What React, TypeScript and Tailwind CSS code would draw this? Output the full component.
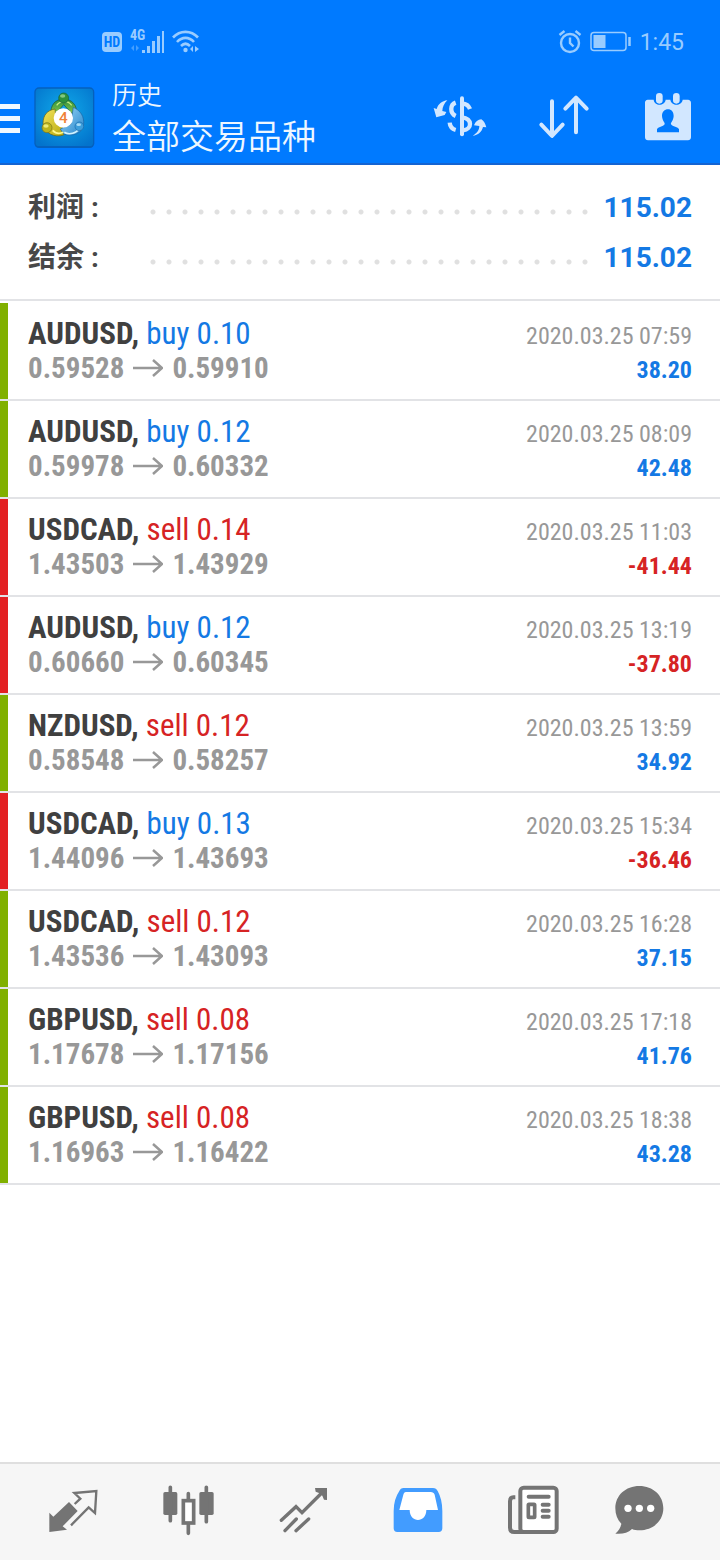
import type { ReactNode } from "react";

// ─── Data ──────────────────────────────────────────────────────────────────────
interface Deal {
  symbol: string;
  side: "buy" | "sell";
  volume: string;
  open: string;
  close: string;
  time: string;
  profit: string;
}

const DEALS: Deal[] = [
  { symbol: "AUDUSD", side: "buy", volume: "0.10", open: "0.59528", close: "0.59910", time: "2020.03.25 07:59", profit: "38.20" },
  { symbol: "AUDUSD", side: "buy", volume: "0.12", open: "0.59978", close: "0.60332", time: "2020.03.25 08:09", profit: "42.48" },
  { symbol: "USDCAD", side: "sell", volume: "0.14", open: "1.43503", close: "1.43929", time: "2020.03.25 11:03", profit: "-41.44" },
  { symbol: "AUDUSD", side: "buy", volume: "0.12", open: "0.60660", close: "0.60345", time: "2020.03.25 13:19", profit: "-37.80" },
  { symbol: "NZDUSD", side: "sell", volume: "0.12", open: "0.58548", close: "0.58257", time: "2020.03.25 13:59", profit: "34.92" },
  { symbol: "USDCAD", side: "buy", volume: "0.13", open: "1.44096", close: "1.43693", time: "2020.03.25 15:34", profit: "-36.46" },
  { symbol: "USDCAD", side: "sell", volume: "0.12", open: "1.43536", close: "1.43093", time: "2020.03.25 16:28", profit: "37.15" },
  { symbol: "GBPUSD", side: "sell", volume: "0.08", open: "1.17678", close: "1.17156", time: "2020.03.25 17:18", profit: "41.76" },
  { symbol: "GBPUSD", side: "sell", volume: "0.08", open: "1.16963", close: "1.16422", time: "2020.03.25 18:38", profit: "43.28" },
];

const SUMMARY = [
  { label: "利润", value: "115.02" },
  { label: "结余", value: "115.02" },
];

// ─── Status bar ────────────────────────────────────────────────────────────────
function StatusBar() {
  return (
    <div className="flex h-[70px] items-center justify-between pt-[14px] pr-9 pl-[102px] text-[#99ccff]">
      <div className="flex items-center gap-2">
        <span className="flex h-5 w-5 items-center justify-center rounded bg-[#99ccff] font-['Roboto_Condensed',Roboto,sans-serif] text-sm leading-5 font-bold text-[#007aff]">HD</span>
        <svg width="34" height="28" viewBox="0 0 34 28" fill="currentColor">
          <text x="0" y="12" fontSize="14" fontWeight="700" fontFamily="Roboto Condensed, Roboto, sans-serif">4G</text>
          <path d="M12 22h3v3h-3zM17 18h3v7h-3zM22 13h3v12h-3zM27 8h3v17h-3zM32 3h3v22h-3z" />
          <path d="M4 17v6L1 20zM6 17v6l3-3z" opacity=".45" />
        </svg>
        <svg width="28" height="24" viewBox="0 0 28 24" fill="none" stroke="currentColor" strokeWidth="2.6">
          <path d="M1 7.500C8 0 19 0 26 7.500M5 12C10 6.500 17 6.500 22 12M9 16c3-3 6-3 9 0" />
          <circle cx="13.500" cy="20" r="2.200" fill="currentColor" stroke="none" />
          <path d="M21 16v6l-3-3zM23 16v6l4-3z" fill="currentColor" stroke="none" />
        </svg>
      </div>
      <div className="flex items-center">
        <svg width="24" height="26" viewBox="0 0 24 26" fill="none" stroke="currentColor" strokeWidth="2.4">
          <circle cx="12" cy="14" r="9" />
          <path d="M12 8.500V14l3.500 3.500M1.500 6 6.500 2M22.500 6l-5-4" />
        </svg>
        <svg className="mr-2 ml-2" width="42" height="22" viewBox="0 0 42 22" fill="none" stroke="currentColor">
          <rect x="1" y="1.500" width="35" height="18" rx="3" strokeWidth="1.500" />
          <rect x="3.500" y="4" width="12" height="13" fill="currentColor" stroke="none" />
          <path d="M39.500 6v9" strokeWidth="2.500" />
        </svg>
        <span className="pt-[2px] text-[23px]">1:45</span>
      </div>
    </div>
  );
}

// ─── App bar ───────────────────────────────────────────────────────────────────
function Logo() {
  return (
    <svg className="ml-3 shrink-0" width="64" height="64" viewBox="12 15 192 192">
      <defs>
        <radialGradient id="tile" cx=".5" cy=".4" r=".7">
          <stop offset="0" stopColor="#10aaea" />
          <stop offset="1" stopColor="#0373cc" />
        </radialGradient>
        <linearGradient id="green" x2="0" y2="1">
          <stop offset="0" stopColor="#2c8f3c" />
          <stop offset="1" stopColor="#8fcb4c" />
        </linearGradient>
        <linearGradient id="yellow" x2="1" y2="1">
          <stop offset="0" stopColor="#f3e45a" />
          <stop offset="1" stopColor="#b4a50c" />
        </linearGradient>
        <linearGradient id="blue" x2="1" y2="1">
          <stop offset="0" stopColor="#9ad9fa" />
          <stop offset="1" stopColor="#2583c9" />
        </linearGradient>
      </defs>
      <rect x="19" y="22" width="180" height="182" rx="14" fill="#0560bd" />
      <rect x="23" y="26" width="172" height="172" rx="10" fill="url(#tile)" />
      <path d="M69 106C66 74 82 58 106 57c26 0 42 18 41 49l-14-4-26-28-25 28z" fill="url(#green)" stroke="#174e38" strokeWidth="2" />
      <path d="M81 87c-24 4-35 18-36 42 4 31 34 45 62 36l9-16-30-18z" fill="url(#yellow)" stroke="#625f16" strokeWidth="2" />
      <path d="M136 82c22 10 33 27 31 52-3 25-32 38-60 28l-10-15 31-14z" fill="url(#blue)" stroke="#1762a3" strokeWidth="2" />
      <path d="M86 76c10-15 33-17 45 0" fill="none" stroke="#c7ed81" strokeWidth="4" />
      <path d="M74 151c8 9 20 11 32 6" fill="none" stroke="#fff78b" strokeWidth="5" />
      <path d="M109 157c15 9 37 2 45-11" fill="none" stroke="#d1f3ff" strokeWidth="5" />
      <circle cx="107" cy="54" r="15" fill="#2d913b" stroke="#17633b" strokeWidth="2" />
      <circle cx="57" cy="143" r="15" fill="#bcb41d" stroke="#77721c" strokeWidth="2" />
      <circle cx="154" cy="139" r="13" fill="#3c9edb" stroke="#1b69ae" strokeWidth="2" />
      <ellipse cx="104" cy="48" rx="8" ry="5" fill="#83c780" />
      <ellipse cx="54" cy="138" rx="8" ry="5" fill="#eeea76" />
      <ellipse cx="152" cy="134" rx="7" ry="4" fill="#a7dbf6" />
      <circle cx="106" cy="114" r="29" fill="#fff" />
      <text x="106" y="130" textAnchor="middle" fontSize="46" fontWeight="500" fontFamily="Roboto, sans-serif" fill="#ef8238">4</text>
    </svg>
  );
}

function ToolButton({ label, viewBox, children }: { label: string; viewBox: string; children: ReactNode }) {
  return (
    <button type="button" aria-label={label} className="text-[#d2e7ff]">
      <svg width="60" height="60" viewBox={viewBox} fill="none" stroke="currentColor" strokeLinecap="round" strokeLinejoin="round">
        {children}
      </svg>
    </button>
  );
}

function AppBar() {
  return (
    <div className="flex h-[93px] items-center pr-[22px]">
      <button type="button" aria-label="菜单" className="mt-1 flex w-5 flex-col gap-[7px]">
        <span className="h-[5px] bg-[#f0f8ff]" />
        <span className="h-[5px] bg-[#f0f8ff]" />
        <span className="h-[5px] bg-[#f0f8ff]" />
      </button>
      <Logo />
      <div className="ml-4 flex-1 pt-[3px] font-[350] text-[#eef7ff]">
        <h1 className="text-[25px] leading-[38px]">历史</h1>
        <p className="text-[34px] leading-[44px]">全部交易品种</p>
      </div>
      <div className="flex gap-11">
        <ToolButton label="货币" viewBox="30 20 180 180">
          <path d="M126 54V162" strokeWidth="12" />
          <path d="M150 86c-4-11-12-16-24-17M107 67c-17 6-18 32 0 40M126 111c32 3 31 36 3 39M107 149c-11-3-17-11-18-22" strokeWidth="13" strokeLinecap="butt" />
          <path d="M82 60C66 62 54 71 50 86l-9-3 8 28 25-7 5-9-12-3c0-12 6-23 15-32zM158 166c14-8 20-18 20-29l-16-2c4-11 12-17 22-18 8 5 12 13 15 24l-10-1c-4 15-14 25-31 26z" fill="currentColor" stroke="none" />
        </ToolButton>
        <ToolButton label="排序" viewBox="342 20 180 180">
          <path d="M396 63v103M364 133l32 34 32-34M468 156V53M436 85l32-33 32 33" strokeWidth="12" />
        </ToolButton>
        <ToolButton label="期间" viewBox="654 20 180 180">
          <path
            d="M683 58h18c2 20 33 20 36 0h14c3 20 34 20 37 0h16c5 0 9 4 9 9v104c0 5-4 9-9 9H684c-5 0-9-4-9-9V67c0-5 3-9 8-9zM711 156h66v-9c-2-7-20-8-24-15-2-5 7-10 8-25 0-13-7-20-17-20s-18 7-18 20c1 15 10 20 8 25-4 7-21 8-23 15z"
            fill="currentColor"
            fillRule="evenodd"
            stroke="none"
          />
          <rect x="708" y="38" width="20" height="32" rx="10" fill="currentColor" stroke="none" />
          <rect x="759" y="38" width="20" height="32" rx="10" fill="currentColor" stroke="none" />
        </ToolButton>
      </div>
    </div>
  );
}

// ─── Summary and deals ─────────────────────────────────────────────────────────
function Summary() {
  return (
    <dl className="border-b-2 border-[#e2e3e6] px-7 pt-[18px] pb-4 text-[28px] leading-[50px] font-bold">
      {SUMMARY.map(({ label, value }) => (
        <div key={label} className="flex items-center">
          <dt className="w-[117px] text-[#484848]">{label} :</dt>
          <span className="mt-2 mr-3 h-4 flex-1 bg-[radial-gradient(circle,#e0e0e0_2px,transparent_3px)] bg-[length:16px_16px]" />
          <dd className="text-[#1479e4]">{value}</dd>
        </div>
      ))}
    </dl>
  );
}

function DealRow({ deal }: { deal: Deal }) {
  const loss = deal.profit.startsWith("-");
  return (
    <li className="flex h-[98px] border-b-2 border-[#e2e3e6] font-['Roboto_Condensed','Liberation_Sans_Narrow',Roboto,sans-serif]">
      <span className={loss ? "w-2 bg-[#e32022]" : "w-2 bg-[#80b000]"} />
      <div className="flex flex-1 justify-between pt-[14px] pr-7 pl-5">
        <div className="leading-[34px]">
          <p className="text-[31px]">
            <b className="text-[#404040]">{deal.symbol},</b>{" "}
            <span className={deal.side === "buy" ? "text-[#1479e4]" : "text-[#d62324]"}>
              {deal.side} {deal.volume}
            </span>
          </p>
          <p className="flex items-center text-[29px] font-bold text-[#989898]">
            {deal.open}
            <svg className="mx-[9px]" width="30" height="18" viewBox="0 0 30 18" fill="none" stroke="currentColor" strokeWidth="2.500">
              <path d="M0 9h29M20 1l9 8-9 8" />
            </svg>
            {deal.close}
          </p>
        </div>
        <div className="pt-[2px] text-right text-2xl leading-[34px]">
          <p className="text-[#989898]">{deal.time}</p>
          <p className={loss ? "font-bold text-[#d62324]" : "font-bold text-[#1479e4]"}>{deal.profit}</p>
        </div>
      </div>
    </li>
  );
}

// ─── Bottom navigation ─────────────────────────────────────────────────────────
function NavButton({ label, viewBox, active = false, children }: {
  label: string; viewBox: string; active?: boolean; children: ReactNode;
}) {
  return (
    <button
      type="button"
      aria-label={label}
      aria-current={active ? "page" : undefined}
      className={active ? "flex flex-1 items-center justify-center text-[#429cff]" : "flex flex-1 items-center justify-center text-[#747474]"}
    >
      <svg width="72" height="60" viewBox={viewBox} fill="none" stroke="currentColor">
        {children}
      </svg>
    </button>
  );
}

function BottomNav() {
  return (
    <nav className="mt-auto flex h-[98px] border-t-2 border-[#dfdfdf] bg-[#f6f6f6] px-4">
      <NavButton label="行情" viewBox="22 66 216 180">
        <path d="M59 158l12 12 47-44 26 27-45 46 13 10-53 7z" fill="currentColor" stroke="none" />
        <path d="M135 132l17-16-18-17 66-6-4 66-19-17-53 54" strokeWidth="7" />
      </NavButton>
      <NavButton label="图表" viewBox="366 66 216 180">
        <rect x="400" y="96" width="42" height="69" rx="5" fill="currentColor" stroke="none" />
        <rect x="508" y="96" width="43" height="69" rx="5" fill="currentColor" stroke="none" />
        <path d="M421 82v100M529 82v103M475 101v16M475 194v26" strokeWidth="11" strokeLinecap="round" />
        <rect x="460" y="122" width="31" height="67" strokeWidth="11" fill="#fff" />
      </NavButton>
      <NavButton label="交易" viewBox="20 66 216 180">
        <path d="M63 181l44-41 18 18 65-65M74 212l34-35M107 212l38-35" strokeWidth="10" strokeLinecap="round" />
        <path d="M164 84h36v36l-9-1-5-12-8-7-12-5z" fill="currentColor" stroke="none" />
      </NavButton>
      <NavButton label="历史" viewBox="364 66 216 180" active>
        <path d="M432 84h88c7 0 11 3 14 9q14 25 14 60v52c0 7-4 11-11 11H413c-7 0-11-4-11-11v-52q0-35 17-60c3-6 6-9 13-9z" fill="currentColor" stroke="none" />
        <path d="M439 96h74c6 0 10 3 12 8l10 46h-35c0 40-50 40-50 0h-31l12-46c2-5 3-8 8-8z" fill="#fff" stroke="none" />
      </NavButton>
      <NavButton label="新闻" viewBox="18 66 216 180">
        <rect x="91" y="83" width="109" height="133" rx="10" strokeWidth="12" fill="#fff" />
        <path d="M76 112H70q-10 0-10 12v79q0 13 13 13h28" strokeWidth="12" strokeLinejoin="round" />
        <path d="M116 110h60M158 134h18M158 152h18M158 170h18" strokeWidth="12" strokeLinecap="round" />
        <rect x="115" y="133" width="19" height="39" rx="2" strokeWidth="11" />
      </NavButton>
      <NavButton label="消息" viewBox="362 66 216 180">
        <path d="M447 78c41 0 72 28 72 67 0 38-31 66-72 66-8 0-15-1-22-4-13 12-29 16-50 14 10-9 16-18 18-30-12-12-18-27-18-46 0-39 31-67 72-67z" fill="currentColor" stroke="none" />
        <g fill="#fff" stroke="none">
          <circle cx="413" cy="145" r="11" />
          <circle cx="447" cy="145" r="11" />
          <circle cx="481" cy="145" r="11" />
        </g>
      </NavButton>
    </nav>
  );
}

// ─── Main Component ────────────────────────────────────────────────────────────
export default function App() {
  return (
    <div className="flex min-h-screen flex-col bg-white font-[Roboto,'Noto_Sans_CJK_SC',sans-serif]">
      <header className="border-b-2 border-[#1464d2] bg-[#007aff]">
        <StatusBar />
        <AppBar />
      </header>
      <main>
        <Summary />
        <ul className="pt-[2px]">
          {DEALS.map(deal => (
            <DealRow key={deal.time} deal={deal} />
          ))}
        </ul>
      </main>
      <BottomNav />
    </div>
  );
}
